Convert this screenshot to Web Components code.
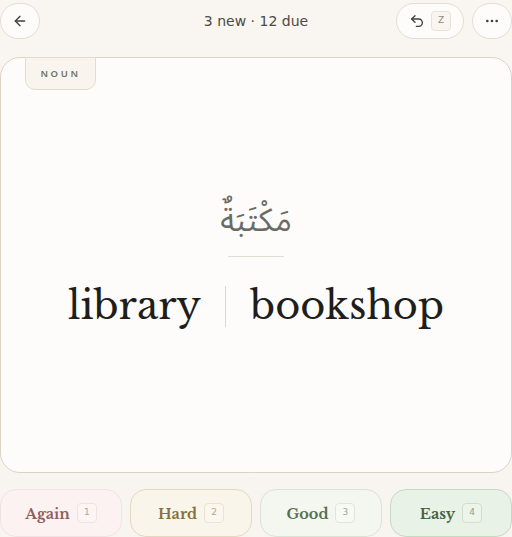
<!DOCTYPE html>
<html><head><meta charset="utf-8"><style>
html,body{margin:0;padding:0;height:537px;overflow:hidden;background:#f9f6f1}
</style></head><body>
<flash-app></flash-app>
<template id="t-icon"><style>
:host{display:flex;align-items:center;justify-content:center;box-sizing:border-box;height:36px;min-width:40px;border:1px solid #e4ddd1;border-radius:18px;background:#fefcfa;color:#3f3f3b;gap:6px;font:10px "DejaVu Sans",sans-serif}
</style><slot></slot></template>
<template id="t-key"><style>
:host{display:flex;align-items:center;justify-content:center;box-sizing:border-box;width:20px;height:20px;border:1px solid var(--kb,#e8e2d8);border-radius:4px;font:9px "DejaVu Sans",sans-serif;color:var(--kc,#8b8880);padding-bottom:3px;font-weight:400;background:var(--kbg,#f9f6f1)}
</style><slot></slot></template>
<template id="t-grade"><style>
:host{flex:1 1 0;display:flex;align-items:center;justify-content:center;gap:7px;box-sizing:border-box;height:48px;padding-top:2px;border:1px solid var(--b);background:var(--bg);color:var(--c);border-radius:16px;font:700 14.5px "Libre Baskerville","Gelasio",serif}
.k{margin-top:-2px}
</style><slot></slot><flash-key class="k"><slot name="k"></slot></flash-key></template>
<template id="t-app"><style>
:host{display:flex;flex-direction:column;height:537px;box-sizing:border-box;background:linear-gradient(#f9f6f1,#f8f5f1)}
header{height:57px;display:flex;box-sizing:border-box;padding:3px 0 0 0;align-items:flex-start;justify-content:space-between;position:relative}
.left{display:flex}
.title{position:absolute;left:0;right:0;top:12px;text-align:center;font:14px/18px "DejaVu Sans",sans-serif;color:#4b4b46}
.right{display:flex;gap:8px}
.card{box-sizing:border-box;height:416px;border:1px solid #ddd3c4;border-radius:20px;background:#fefcfa;position:relative;display:flex;flex-direction:column;align-items:center}
.pos{position:absolute;left:24px;top:-1px;box-sizing:border-box;width:71px;height:33px;border:1px solid #e4dccd;border-radius:0 0 10px 10px;background:#f9f5ee;font:600 9.5px/31px "Noto Sans","DejaVu Sans",sans-serif;letter-spacing:2.6px;text-align:center;color:#6f7268}
.ar{margin-top:135px;font:32px/56px "Noto Sans Arabic","DejaVu Sans",sans-serif;color:#6b6b66}
.rule{width:56px;height:1px;background:#e4dccd;margin-top:7px}
.words{display:flex;align-items:center;margin-top:28px;font:400 38.4px/42px "Libre Baskerville","Gelasio",serif;color:#1e1e1c;gap:24px}
.v{width:1px;height:41px;background:#ddd7cc}
footer{display:flex;gap:8px;margin-top:16px}
</style>
<header>
<div class="left"><flash-icon style="width:40px"><svg width="16" height="16" viewBox="0 0 24 24" fill="none" stroke="currentColor" stroke-width="2" stroke-linecap="round" stroke-linejoin="round"><path d="m12 19-7-7 7-7"/><path d="M19 12H5"/></svg></flash-icon></div>
<div class="title">3 new · 12 due</div>
<div class="right"><flash-icon style="width:68px"><svg width="16" height="16" viewBox="0 0 24 24" fill="none" stroke="currentColor" stroke-width="2" stroke-linecap="round" stroke-linejoin="round"><path d="M9 14 4 9l5-5"/><path d="M4 9h10.5a5.5 5.5 0 0 1 5.5 5.5a5.5 5.5 0 0 1-5.5 5.5H11"/></svg><flash-key>Z</flash-key></flash-icon><flash-icon style="width:40px"><svg width="16" height="16" viewBox="0 0 24 24" fill="none" stroke="currentColor" stroke-width="2" stroke-linecap="round" stroke-linejoin="round"><circle cx="12" cy="12" r="1"/><circle cx="19" cy="12" r="1"/><circle cx="5" cy="12" r="1"/></svg></flash-icon></div>
</header>
<div class="card">
<div class="pos">NOUN</div>
<div class="ar" dir="rtl" lang="ar">مَكْتَبَةٌ</div>
<div class="rule"></div>
<div class="words"><span>library</span><span class="v"></span><span>bookshop</span></div>
</div>
<footer>
<flash-grade style="--b:#f1e3e3;--bg:#fcf2f2;--c:#8f5f5f;--kb:#f1e3e3;--kc:#b89999;--kbg:#fcf5f4">Again<span slot="k">1</span></flash-grade>
<flash-grade style="--b:#e3d9c1;--bg:#f9f5ea;--c:#85703f;--kb:#ebe3d2;--kc:#b5a786;--kbg:#fbf7ef">Hard<span slot="k">2</span></flash-grade>
<flash-grade style="--b:#dbe3d6;--bg:#f4f7f0;--c:#566f50;--kb:#e0e6da;--kc:#9aa894;--kbg:#f7f9f4">Good<span slot="k">3</span></flash-grade>
<flash-grade style="--b:#c8d9c3;--bg:#e9f2e6;--c:#46603f;--kb:#d0dfcb;--kc:#8ea088;--kbg:#edf4ea">Easy<span slot="k">4</span></flash-grade>
</footer>
</template>
<script>
function def(name,id){customElements.define(name,class extends HTMLElement{constructor(){super();this.attachShadow({mode:'open'}).appendChild(document.getElementById(id).content.cloneNode(true));}});}
def('flash-icon','t-icon');def('flash-key','t-key');def('flash-grade','t-grade');def('flash-app','t-app');
</script>
</body></html>
